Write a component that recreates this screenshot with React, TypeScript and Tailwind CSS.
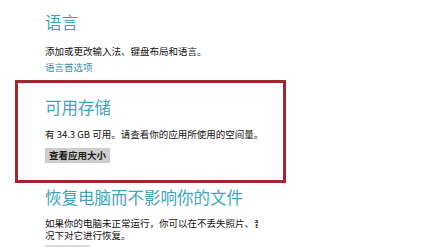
export default function App() {
  return (
    <div className="w-[436px] h-[247px] overflow-hidden bg-white text-[#111111] font-['Noto_Sans_CJK_SC',sans-serif]">
      <div className="pl-[45px] pt-[14px]">
        <h2 className="text-[16.5px] leading-[17px] text-[#3ea6bb]">语言</h2>
        <p className="mt-[14px] text-[9.5px] leading-[12px]">添加或更改输入法、键盘布局和语言。</p>
        <a className="mt-[4px] block text-[9.5px] leading-[12px] text-[#3a8fa6]">语言首选项</a>
      </div>

      {/* highlighted section */}
      <div className="mt-[7px] ml-[15px] w-[271px] h-[103px] border-[3px] border-[#a3262f] pl-[27px] pt-[16px]">
        <h2 className="text-[16.5px] leading-[17px] text-[#3ea6bb]">可用存储</h2>
        <p className="mt-[12px] text-[9.5px] leading-[12px] whitespace-nowrap">
          有 34.3 GB 可用。请查看你的应用所使用的空间量。
        </p>
        <button className="mt-[8px] h-[15px] px-[4px] bg-[#cdcdcd] text-[9.5px] leading-[15px] font-bold text-[#1c1c1c]">
          查看应用大小
        </button>
      </div>

      <div className="pl-[45px] mt-[6px]">
        <h2 className="text-[16.5px] leading-[17px] text-[#3ea6bb] whitespace-nowrap">恢复电脑而不影响你的文件</h2>
        <div className="mt-[11px] w-[213px] overflow-hidden text-[9.5px] leading-[12px] whitespace-nowrap">
          <p>如果你的电脑未正常运行，你可以在不丢失照片、音乐、视频或其他个人文件的情</p>
          <p>况下对它进行恢复。</p>
        </div>
        <div className="mt-[4px] h-[10px] w-[45px] bg-[#dadada]" />
      </div>
    </div>
  );
}
